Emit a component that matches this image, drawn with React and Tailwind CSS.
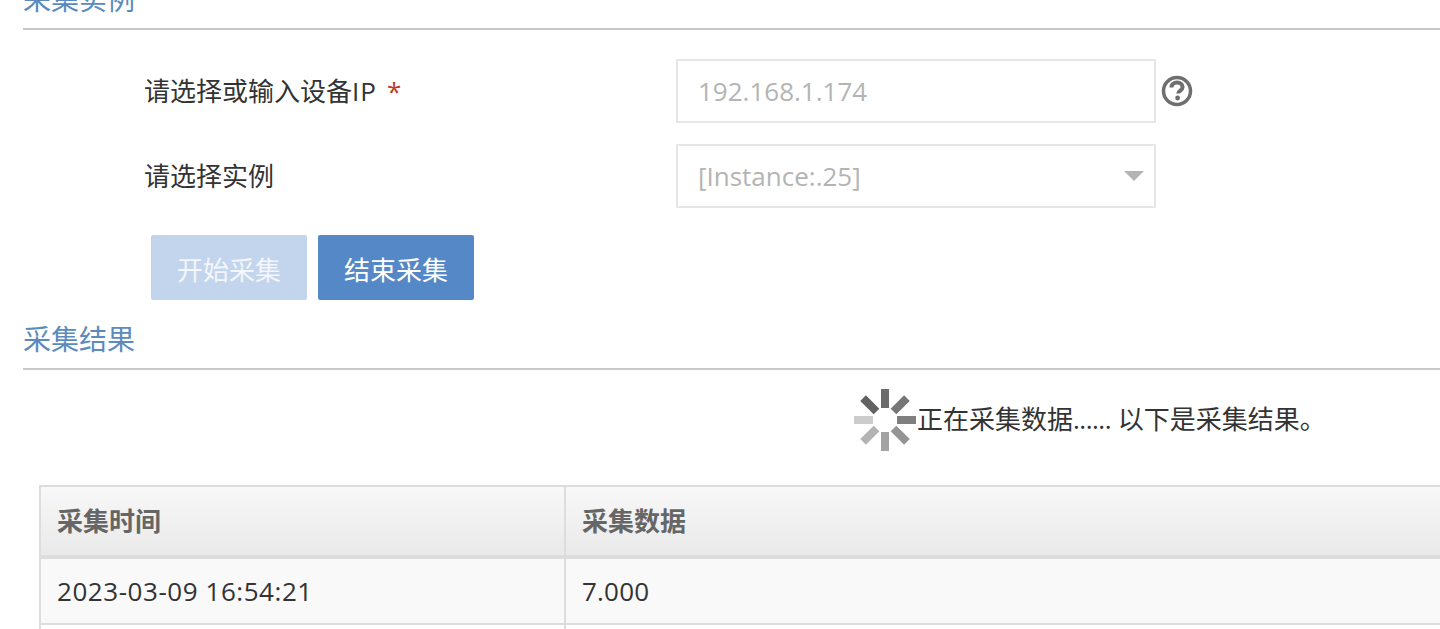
const fontStack = { fontFamily: '"Open Sans", "Noto Sans CJK SC", sans-serif' };

function Heading({ children, className }) {
  return (
    <div className={`ml-[23px] border-b-2 border-[#c8c8c8] text-[28px] text-[#5b8bbd] ${className}`}>
      {children}
    </div>
  );
}

function Spinner() {
  const bars = [
    { a: 0, c: "#6b6b6b" },
    { a: 45, c: "#767676" },
    { a: 90, c: "#7f7f7f" },
    { a: 135, c: "#949494" },
    { a: 180, c: "#a3a3a3" },
    { a: 225, c: "#b3b3b3" },
    { a: 270, c: "#cccccc" },
    { a: 315, c: "#616161" },
  ];
  return (
    <svg width="64" height="64" viewBox="0 0 64 64" className="shrink-0">
      {bars.map((b) => (
        <rect key={b.a} x="28" y="1" width="8" height="19" fill={b.c} transform={`rotate(${b.a} 32 32)`} />
      ))}
    </svg>
  );
}

function HelpIcon() {
  return (
    <svg width="32" height="32" viewBox="0 0 32 32" className="shrink-0">
      <circle cx="16" cy="16" r="13.5" fill="none" stroke="#6f6f6f" strokeWidth="3.5" />
      <path d="M10.5 12.5c0-3 2.4-5 5.6-5s5.5 1.8 5.5 4.5c0 3.6-4.4 3.4-4.4 6.6" fill="none" stroke="#6f6f6f" strokeWidth="4" />
      <circle cx="16.6" cy="23" r="2.4" fill="#6f6f6f" />
    </svg>
  );
}

export default function App() {
  return (
    <div className="h-[629px] w-[1440px] overflow-hidden bg-white text-[26px] text-[#333333]" style={fontStack}>
      <Heading className="-mt-[12px] h-[42px] leading-[22px]">采集实例</Heading>

      <div className="mt-[29px] flex h-[64px] items-center">
        <div className="ml-[144px] w-[532px]">
          请选择或输入设备<span className="tracking-[1px]">IP</span><span className="ml-[10px] text-[#c0392b]">*</span>
        </div>
        <div className="flex h-[64px] w-[480px] items-center border-2 border-[#e6e6e6] pl-[20px] text-[#b4b4b4]">192.168.1.174</div>
        <div className="ml-[5px]"><HelpIcon /></div>
      </div>

      <div className="mt-[21px] flex h-[64px] items-center">
        <div className="ml-[144px] w-[532px]">请选择实例</div>
        <div className="flex h-[64px] w-[480px] items-center justify-between border-2 border-[#e6e6e6] pl-[20px] pr-[10px] text-[#b4b4b4]">
          [Instance:.25]
          <span className="h-0 w-0 border-x-[10px] border-t-[10px] border-x-transparent border-t-[#b4b4b4]" />
        </div>
      </div>

      <div className="ml-[151px] mt-[27px] flex gap-[11px]">
        <button className="h-[65px] w-[156px] rounded-[2px] bg-[#c3d5ec] pt-[6px] text-[#f3f6fb]">开始采集</button>
        <button className="h-[65px] w-[156px] rounded-[2px] bg-[#5488c6] pt-[6px] text-white">结束采集</button>
      </div>

      <Heading className="mt-[20px] h-[50px] leading-[38px]">采集结果</Heading>

      <div className="mt-[18px] ml-[853px] flex h-[64px] items-center whitespace-nowrap">
        <Spinner />
        <span className="pb-[2px]">
          正在采集数据<span className="tracking-[-0.5px]">......</span> 以下是采集结果。
        </span>
      </div>

      <table className="ml-[39px] mt-[33px] w-[1500px] table-fixed border-collapse">
        <thead>
          <tr className="bg-gradient-to-b from-[#f8f8f8] to-[#e9e9e9]">
            <th className="h-[71px] w-[525px] border-2 border-b-4 border-[#dddddd] pl-[16px] text-left font-bold text-[#666666]">采集时间</th>
            <th className="h-[71px] border-2 border-b-4 border-[#dddddd] pl-[16px] text-left font-bold text-[#666666]">采集数据</th>
          </tr>
        </thead>
        <tbody>
          <tr className="bg-[#f9f9f9]">
            <td className="h-[67px] border-2 border-[#dddddd] pl-[16px] tracking-[0.55px]">2023-03-09 16:54:21</td>
            <td className="h-[67px] border-2 border-[#dddddd] pl-[16px] tracking-[0.2px]">7.000</td>
          </tr>
          <tr>
            <td className="h-[66px] border-2 border-[#dddddd]"></td>
            <td className="h-[66px] border-2 border-[#dddddd]"></td>
          </tr>
        </tbody>
      </table>
    </div>
  );
}
